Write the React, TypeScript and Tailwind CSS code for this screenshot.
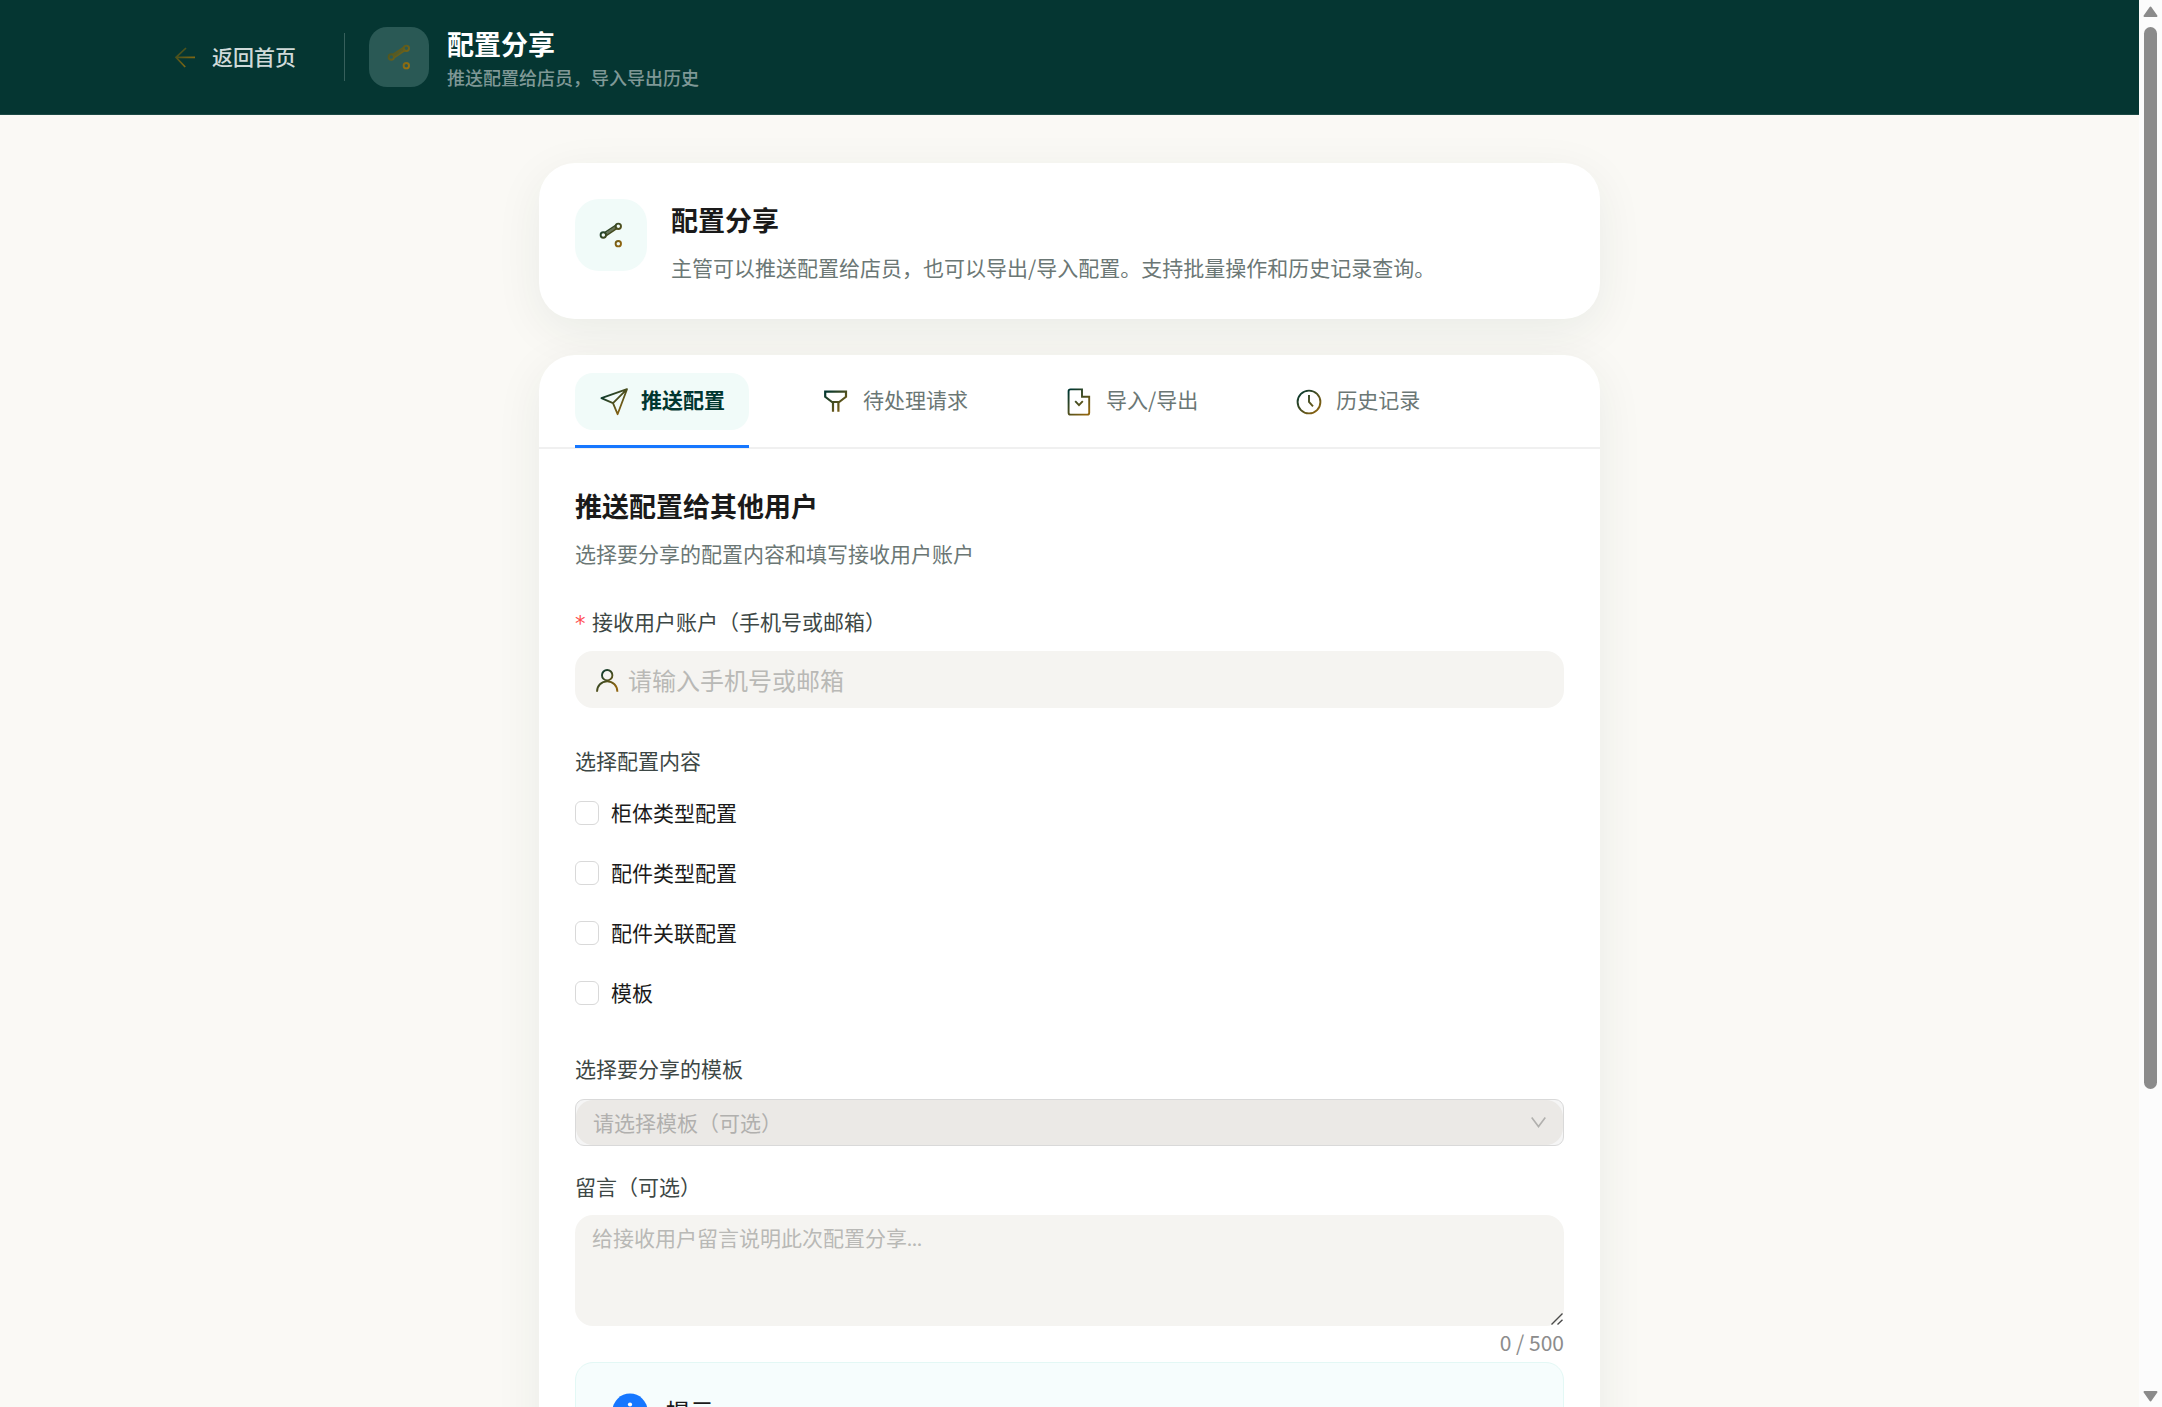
import { useState, type ReactNode } from 'react';

type GlyphProps = {
  name: string;
  size: number;
  from?: string;
  to?: string;
  className?: string;
  children: ReactNode;
};

const Glyph = ({ name, size, from = '#003630', to = '#8f6510', className = '', children }: GlyphProps) => (
  <svg width={size} height={size} viewBox={`0 0 ${size} ${size}`} fill="none" stroke={`url(#${name})`} strokeWidth="1.9" className={`shrink-0 ${className}`}>
    <defs>
      <linearGradient id={name} gradientUnits="userSpaceOnUse" x1={size * 0.15} y1={size * 0.15} x2={size * 0.82} y2={size * 0.82}>
        <stop offset="0" stopColor={from} />
        <stop offset="1" stopColor={to} />
      </linearGradient>
    </defs>
    {children}
  </svg>
);

const ShareIcon = ({ name, from, to }: { name: string; from?: string; to?: string }) => (
  <Glyph name={name} size={30} from={from} to={to}>
    <circle cx="7.3" cy="15" r="2.7" />
    <circle cx="22.3" cy="6.3" r="2.7" />
    <circle cx="22.3" cy="23.7" r="2.7" />
    <path d="M8.6 12.6 20 5.2M9.9 15.8 21.4 8" strokeWidth="1.6" />
    <path d="M9.5 14.2 20.6 6.7" strokeWidth="2.2" opacity="0.75" />
  </Glyph>
);

const tabs = [
  {
    key: 'push',
    label: '推送配置',
    icon: (
      <Glyph name="g-send" size={30}>
        <path d="M28 2.2 2.4 11.2 14 16.2 18.6 27.2ZM28 2.2 14 16.2" strokeWidth="1.8" strokeLinejoin="round" />
      </Glyph>
    ),
  },
  {
    key: 'pending',
    label: '待处理请求',
    icon: (
      <Glyph name="g-filter" size={30}>
        <path d="M4.2 4.7H25V9.8L18.2 15H11L4.2 9.8ZM12 15V24.8M17.4 15V24.8" strokeWidth="2.2" />
      </Glyph>
    ),
  },
  {
    key: 'io',
    label: '导入/导出',
    icon: (
      <Glyph name="g-file" size={30}>
        <path d="M18 2.4H6.5Q4.6 2.4 4.6 4.3V25.7Q4.6 27.6 6.5 27.6H23.3Q25.2 27.6 25.2 25.7V9.7H18ZM11.2 14.2 15 18.2 18.8 14.2" />
      </Glyph>
    ),
  },
  {
    key: 'history',
    label: '历史记录',
    icon: (
      <Glyph name="g-clock" size={30}>
        <circle cx="15" cy="15" r="11.4" />
        <path d="M15 8V15L19 19.4" />
      </Glyph>
    ),
  },
];

const contents = ['柜体类型配置', '配件类型配置', '配件关联配置', '模板'];

export default function App() {
  const [active, setActive] = useState('push');

  return (
    <div className="flex h-[1407px] w-[2162px] overflow-hidden bg-[#faf9f5] font-['Noto_Sans_CJK_SC',sans-serif] text-[21px] leading-[33px]">
      <div className="h-full w-[2139px] overflow-hidden">
        <header className="flex h-[115px] items-center border-b border-[#1c4a45] bg-[#053632] pl-[171px] backdrop-blur-sm">
          <button className="flex items-center font-medium text-[#d0dad9]">
            <Glyph name="g-back" size={28} from="#2b4422" to="#96700f" className="mr-[13px]">
              <path d="M15 5 5 14.4 14.2 24M5 14.4H24" strokeWidth="1.7" />
            </Glyph>
            <span className="-mt-[2px]">返回首页</span>
          </button>
          <div className="ml-[48px] h-12 w-px bg-[#37605c]" />
          <div className="ml-6 flex size-[60px] items-center justify-center rounded-[18px] bg-[#2a5955]">
            <ShareIcon name="g-share-top" from="#3f4f22" to="#96700f" />
          </div>
          <div className="ml-[18px] pt-[6px]">
            <h1 className="text-[27px] leading-[34px] font-bold text-white">配置分享</h1>
            <p className="text-[18px] leading-[32px] font-medium text-[#7f9896]">推送配置给店员，导入导出历史</p>
          </div>
        </header>

        <main className="mx-auto mt-12 w-[1061px]">
          <section className="flex h-[156px] rounded-[36px] bg-white p-9 shadow-[0_12px_48px_rgba(0,51,43,0.07)]">
            <div className="flex size-[72px] items-center justify-center rounded-3xl bg-[#f1fbf9]">
              <ShareIcon name="g-share-card" />
            </div>
            <div className="ml-6">
              <h2 className="text-[27px] leading-[42px] font-bold text-[#1a1a1a]">配置分享</h2>
              <p className="mt-[10px] text-[#6b7775]">主管可以推送配置给店员，也可以导出/导入配置。支持批量操作和历史记录查询。</p>
            </div>
          </section>

          <section className="mt-9 h-[1200px] rounded-[36px] bg-white shadow-[0_12px_48px_rgba(0,51,43,0.07)]">
            <nav className="flex h-[94px] gap-12 border-b-2 border-[#f0f0f0] px-9 pt-[18px]">
              {tabs.map(tab => (
                <button key={tab.key} onClick={() => setActive(tab.key)} className="relative flex h-[75px] flex-col">
                  <span
                    className={
                      active === tab.key
                        ? 'flex h-[57px] items-center gap-3 rounded-[18px] bg-[#f1fbf9] px-6 font-bold text-[#003630]'
                        : 'flex h-[57px] items-center gap-3 px-6 text-[#6b7775]'
                    }
                  >
                    {tab.icon}
                    <span className="-mt-[4px]">{tab.label}</span>
                  </span>
                  {active === tab.key && <span className="absolute inset-x-0 bottom-0 h-[3px] bg-[#1677ff]" />}
                </button>
              ))}
            </nav>

            <div className="px-9 pt-9">
              <h3 className="text-[27px] leading-[42px] font-bold text-[#1a1a1a]">推送配置给其他用户</h3>
              <p className="mt-[10px] text-[#6b7775]">选择要分享的配置内容和填写接收用户账户</p>

              <label className="mt-[35px] flex text-[#3d4745]">
                <span className="mr-[6px] w-[11px] pt-[3px] font-['DejaVu_Sans',sans-serif] text-[#ff4d4f]">*</span>
                接收用户账户（手机号或邮箱）
              </label>
              <div className="mt-[10px] flex h-[57px] items-center rounded-[18px] bg-[#f5f4f1] px-5">
                <Glyph name="g-user" size={24}>
                  <circle cx="12.2" cy="7.2" r="5.2" />
                  <path d="M2 23.8C2 17.5 6.5 13.4 12.2 13.4S22.4 17.5 22.4 23.8" />
                </Glyph>
                <input placeholder="请输入手机号或邮箱" className="ml-[9px] flex-1 bg-transparent text-[24px] outline-none placeholder:text-[#b9b9b6]" />
              </div>

              <div className="mt-[36px] text-[#3d4745]">选择配置内容</div>
              <div className="mt-[19px] flex flex-col gap-[27px]">
                {contents.map(item => (
                  <label key={item} className="flex h-[33px] items-center gap-3 text-[#1a1a1a]">
                    <span className="size-6 rounded-[6px] border border-[#d9d9d9] bg-white" />
                    {item}
                  </label>
                ))}
              </div>

              <div className="mt-[43px] text-[#3d4745]">选择要分享的模板</div>
              <div className="mt-[14px] h-[47px] overflow-hidden rounded-[9px] border border-[#d9d9d9] bg-[#f5f5f5]">
                <div className="flex h-full items-center justify-between rounded-[17px] bg-[#ebe9e6] pr-[17px] pl-[17px] text-[#b1b0ae]">
                  <span className="-mt-px">请选择模板（可选）</span>
                  <svg width="15" height="11" viewBox="0 0 15 11" fill="none" stroke="#b1b0ae" strokeWidth="1.6">
                    <path d="M.7.6 7.5 9.6 14.3.6" />
                  </svg>
                </div>
              </div>

              <div className="mt-[24px] text-[#3d4745]">留言（可选）</div>
              <textarea
                placeholder="给接收用户留言说明此次配置分享..."
                className="mt-[12px] block h-[111px] w-full resize-none rounded-[18px] bg-[#f5f4f1] px-[17px] pt-[6px] font-['Lato','Noto_Sans_CJK_SC',sans-serif] outline-none placeholder:text-[#b9b9b6]"
              />
              <div className="relative text-right text-[#8c8c8c]">
                <svg width="12" height="12" viewBox="0 0 12 12" stroke="#4a4a4a" strokeWidth="1.4" className="absolute -top-[13px] right-[1px]">
                  <path d="M.5 11.5 11.5.5M6.5 11.5 11.5 6.8" />
                </svg>
                0 / 500
              </div>

              <div className="mt-[3px] flex h-[180px] rounded-[18px] border border-[#e3f8f5] bg-[#f6fdfd] pt-[30px] pl-9">
                <svg width="36" height="36" viewBox="0 0 36 36">
                  <circle cx="18" cy="18" r="17.5" fill="#1677ff" />
                  <circle cx="18" cy="11.5" r="2.1" fill="#fff" />
                  <rect x="16.6" y="16" width="2.8" height="11" rx="0.5" fill="#fff" />
                </svg>
                <div className="ml-[18px] text-[24px] leading-9 text-[#1a1a1a]">提示</div>
              </div>
            </div>
          </section>
        </main>
      </div>

      <div className="flex w-[23px] flex-col items-center bg-[#fcfcfc] pt-[6px] pb-[5px]">
        <svg width="15" height="12" viewBox="0 0 15 12" fill="#8b8b8b" stroke="#8b8b8b" strokeWidth="2" strokeLinejoin="round">
          <path d="M7.5 1.5 13.5 10H1.5Z" />
        </svg>
        <div className="mt-[9px] h-[1062px] w-[13px] rounded-full bg-[#8b8b8b]" />
        <svg width="15" height="12" viewBox="0 0 15 12" fill="#8b8b8b" stroke="#8b8b8b" strokeWidth="2" strokeLinejoin="round" className="mt-auto">
          <path d="M7.5 10.5 13.5 2H1.5Z" />
        </svg>
      </div>
    </div>
  );
}
